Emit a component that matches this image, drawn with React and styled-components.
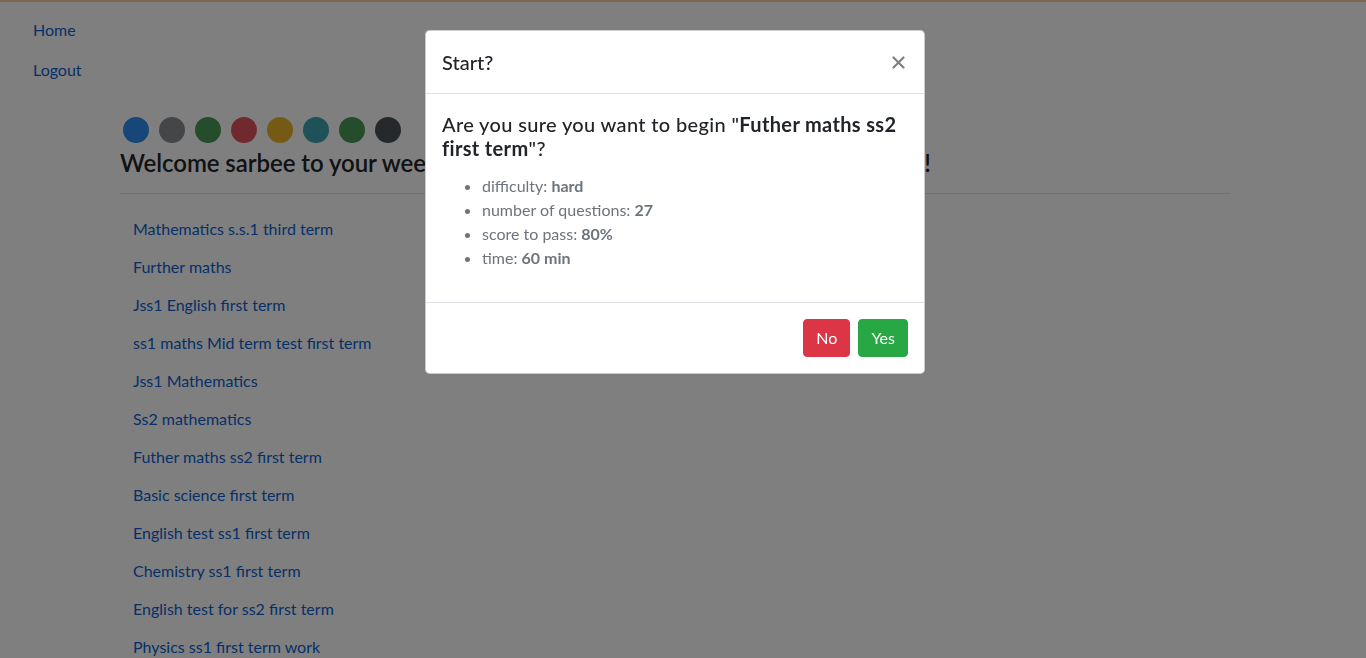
import React from 'react';
import styled, { createGlobalStyle } from 'styled-components';

const GlobalStyle = createGlobalStyle`
  html, body {
    margin: 0;
    padding: 0;
    height: 100%;
    overflow: hidden;
  }
  body {
    font-family: "Segoe UI", Lato, "Open Sans", sans-serif;
    font-size: 16px;
    line-height: 1.5;
    color: #212529;
    background: #fff;
    border-top: 2px solid #f7cf9f;
  }
  *, *::before, *::after {
    box-sizing: border-box;
  }
`;

const Page = styled.div`
  padding-top: 8px;
`;

const SideNav = styled.nav`
  display: flex;
  flex-direction: column;
  align-items: flex-start;
  padding-left: 17px;
`;

const NavLink = styled.a`
  display: block;
  padding: 8px 16px;
  color: #0d5fd0;
  text-decoration: none;
`;

const Container = styled.main`
  width: 1110px;
  margin: 27px 0 0 120px;
`;

const Dots = styled.div`
  display: flex;
  gap: 10px;
  padding-left: 3px;
`;

const Dot = styled.span`
  width: 26px;
  height: 26px;
  border-radius: 50%;
  background: ${(p) => p.color};
`;

const Heading = styled.h4`
  margin: 6px 0 0;
  font-size: 24px;
  font-weight: 600;
  line-height: 1.2;
  letter-spacing: -0.06px;
  white-space: nowrap;
`;

const Rule = styled.hr`
  margin: 15px 0 0;
  border: 0;
  border-top: 1px solid rgba(0, 0, 0, 0.1);
`;

const QuizList = styled.ul`
  list-style: none;
  margin: 16px 0 0;
  padding: 0;
`;

const QuizItem = styled.li`
  padding: 7px 13px;
`;

const QuizLink = styled.a`
  color: #0d5fd0;
  text-decoration: none;
`;

const Backdrop = styled.div`
  position: fixed;
  inset: 0;
  background: rgba(0, 0, 0, 0.5);
`;

const Dialog = styled.div`
  position: fixed;
  top: 30px;
  left: 425px;
  width: 500px;
  background: #fff;
  border: 1px solid rgba(0, 0, 0, 0.2);
  border-radius: 4.8px;
  display: flex;
  flex-direction: column;
`;

const Header = styled.div`
  display: flex;
  align-items: center;
  justify-content: space-between;
  padding: 16px;
  border-bottom: 1px solid #dee2e6;
`;

const Title = styled.h5`
  margin: 0;
  font-size: 20px;
  font-weight: 500;
  line-height: 1.5;
`;

const Close = styled.button`
  display: flex;
  background: transparent;
  border: 0;
  padding: 0 3px 0 0;
  color: #000;
  opacity: 0.5;
`;

const Body = styled.div`
  padding: 16px;
`;

const Question = styled.h5`
  margin: 2px 0 14px;
  font-size: 20px;
  font-weight: 500;
  line-height: 1.2;
  letter-spacing: 0.35px;
`;

const Facts = styled.ul`
  margin: 0 0 16px;
  padding-left: 40px;
  color: #6c757d;
`;

const Footer = styled.div`
  display: flex;
  justify-content: flex-end;
  padding: 12px;
  border-top: 1px solid #dee2e6;
`;

const Button = styled.button`
  margin: 4px;
  padding: 6px 12px;
  font-family: inherit;
  font-size: 16px;
  line-height: 1.5;
  color: #fff;
  background: ${(p) => p.bg};
  border: 1px solid ${(p) => p.bg};
  border-radius: 4px;
`;

const dots = ['#2f8cf0', '#888c90', '#4a9a58', '#e0545f', '#e8b528', '#3fa2b0', '#4a9a58', '#4c5257'];

const quizzes = [
  'Mathematics s.s.1 third term',
  'Further maths',
  'Jss1 English first term',
  'ss1 maths Mid term test first term',
  'Jss1 Mathematics',
  'Ss2 mathematics',
  'Futher maths ss2 first term',
  'Basic science first term',
  'English test ss1 first term',
  'Chemistry ss1 first term',
  'English test for ss2 first term',
  'Physics ss1 first term work',
];

export default function App() {
  return (
    <>
      <GlobalStyle />
      <Page>
        <SideNav>
          <NavLink href="#">Home</NavLink>
          <NavLink href="#">Logout</NavLink>
        </SideNav>
        <Container>
          <Dots>
            {dots.map((c, i) => (
              <Dot key={i} color={c} />
            ))}
          </Dots>
          <Heading>Welcome sarbee to your weekly quiz dashboard, choose a quiz to get started!</Heading>
          <Rule />
          <QuizList>
            {quizzes.map((q) => (
              <QuizItem key={q}>
                <QuizLink href="#">{q}</QuizLink>
              </QuizItem>
            ))}
          </QuizList>
        </Container>
      </Page>
      <Backdrop />
      <Dialog>
        <Header>
          <Title>Start?</Title>
          <Close aria-label="Close">
            <svg width="13" height="13" viewBox="0 0 13 13">
              <path d="M1.5 1.5l10 10M11.5 1.5l-10 10" stroke="currentColor" strokeWidth="2.2" strokeLinecap="round" />
            </svg>
          </Close>
        </Header>
        <Body>
          <Question>
            Are you sure you want to begin "<b>Futher maths ss2 first term</b>"?
          </Question>
          <Facts>
            <li>difficulty: <b>hard</b></li>
            <li>number of questions: <b>27</b></li>
            <li>score to pass: <b>80%</b></li>
            <li>time: <b>60 min</b></li>
          </Facts>
        </Body>
        <Footer>
          <Button bg="#dc3545">No</Button>
          <Button bg="#28a745">Yes</Button>
        </Footer>
      </Dialog>
    </>
  );
}
